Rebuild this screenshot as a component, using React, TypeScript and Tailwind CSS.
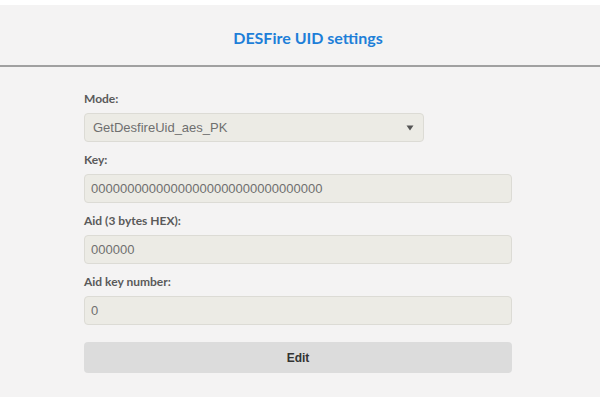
export default function App() {
  const label = "block text-[12px] font-bold text-[#5a5a5a] leading-none";
  const input =
    "h-[29px] rounded-[4px] border border-[#dcdbd5] bg-[#ecebe5] px-[6px] flex items-center text-[13px] text-[#6f6f6f] font-['Liberation_Sans',Arial,sans-serif]";
  return (
    <div className="w-[600px] h-[400px] bg-white flex flex-col font-['Lato',sans-serif]">
      <div className="h-[5px] bg-white" />
      <div className="flex-1 bg-[#f4f3f3] flex flex-col">
        <div className="h-[62px] flex items-center justify-center pl-[16px] border-b-2 border-[#a0a0a0]">
          <span className="text-[16px] font-bold text-[#1e7fd8] mt-[6px]">DESFire UID settings</span>
        </div>
        <div className="pl-[84px] pr-[88px] pt-[26px] flex flex-col">
          <span className={label}>Mode:</span>
          <div className={input + " w-[340px] justify-between mt-[8px] pl-[8px]"}>
            <span>GetDesfireUid_aes_PK</span>
            <svg width="8" height="6" viewBox="0 0 8 6" className="mr-[3px]">
              <path d="M0.5 0.5 L7.5 0.5 L4 5.5 Z" fill="#555" />
            </svg>
          </div>
          <span className={label + " mt-[12px]"}>Key:</span>
          <div className={input + " w-full mt-[8px]"}>00000000000000000000000000000000</div>
          <span className={label + " mt-[12px]"}>Aid (3 bytes HEX):</span>
          <div className={input + " w-full mt-[8px]"}>000000</div>
          <span className={label + " mt-[12px]"}>Aid key number:</span>
          <div className={input + " w-full mt-[8px]"}>0</div>
          <button className="mt-[17px] h-[31px] w-full rounded-[4px] bg-[#dcdcdc] text-[12px] font-bold text-[#333] font-['Liberation_Sans',Arial,sans-serif]">
            Edit
          </button>
        </div>
      </div>
      <div className="h-[3px] bg-white" />
    </div>
  );
}
